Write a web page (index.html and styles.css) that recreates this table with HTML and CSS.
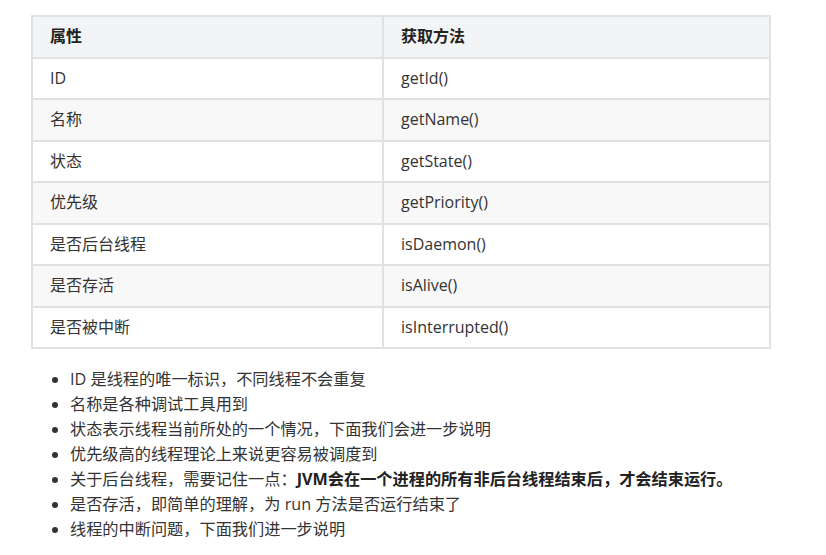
FILE: index.html
```html
<!DOCTYPE html>
<html lang="zh">
<head>
<meta charset="utf-8">
<title>线程属性</title>
<link rel="stylesheet" href="styles.css">
</head>
<body>
<div class="page">
  <table class="props">
    <colgroup>
      <col class="col-a">
      <col class="col-b">
    </colgroup>
    <thead>
      <tr><th>属性</th><th>获取方法</th></tr>
    </thead>
    <tbody>
      <tr><td>ID</td><td>getId()</td></tr>
      <tr><td>名称</td><td>getName()</td></tr>
      <tr><td>状态</td><td>getState()</td></tr>
      <tr><td>优先级</td><td>getPriority()</td></tr>
      <tr><td>是否后台线程</td><td>isDaemon()</td></tr>
      <tr><td>是否存活</td><td>isAlive()</td></tr>
      <tr><td>是否被中断</td><td>isInterrupted()</td></tr>
    </tbody>
  </table>
  <ul class="notes">
    <li>ID 是线程的唯一标识，不同线程不会重复</li>
    <li>名称是各种调试工具用到</li>
    <li>状态表示线程当前所处的一个情况，下面我们会进一步说明</li>
    <li>优先级高的线程理论上来说更容易被调度到</li>
    <li>关于后台线程，需要记住一点：<strong>JVM会在一个进程的所有非后台线程结束后，才会结束运行。</strong></li>
    <li>是否存活，即简单的理解，为 run 方法是否运行结束了</li>
    <li>线程的中断问题，下面我们进一步说明</li>
  </ul>
</div>
</body>
</html>
```

FILE: styles.css
```css
html, body {
  margin: 0;
  padding: 0;
  background: #ffffff;
}

body {
  font-family: "Open Sans", "Noto Sans CJK SC", sans-serif;
  font-size: 16.2px;
  color: #333333;
}

.page {
  padding: 15px 0 0 31px;
}

.props {
  width: 738px;
  table-layout: fixed;
  border-collapse: collapse;
  border: 2px solid #dfe2e5;
}

.col-a { width: 351px; }
.col-b { width: 387px; }

.props th,
.props td {
  border: 2px solid #dfe2e5;
  padding: 9px 16px 9px 17px;
  line-height: 21.5px;
  text-align: left;
  font-size: 16px;
}

.props th {
  font-weight: 700;
  color: #222222;
  background: #f3f4f5;
}

.props tbody tr:nth-child(2n) td {
  background: #f8f8f8;
}

.notes {
  margin: 18px 0 0 0;
  padding-left: 39px;
  line-height: 25px;
}

.notes strong {
  font-weight: 700;
  color: #222222;
}
```
